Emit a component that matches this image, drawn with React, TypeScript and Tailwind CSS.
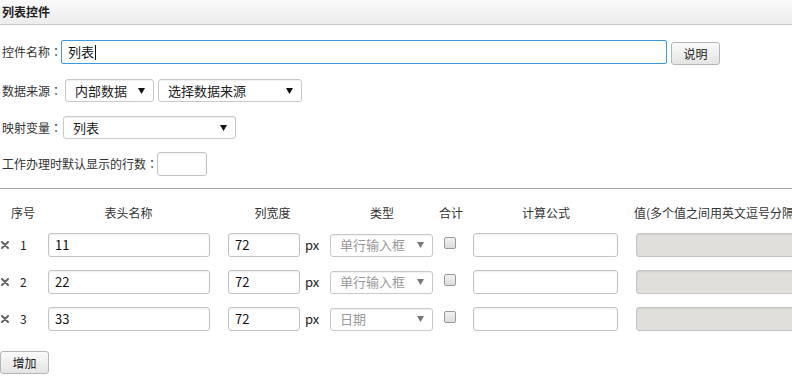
import React from "react";

const font = { fontFamily: '"Noto Sans CJK SC", "Liberation Sans", sans-serif' };

type Col = { name: string; width: string; type: string };

const rows: Col[] = [
  { name: "11", width: "72", type: "单行输入框" },
  { name: "22", width: "72", type: "单行输入框" },
  { name: "33", width: "72", type: "日期" },
];

function Arrow({ gray }: { gray?: boolean }) {
  return (
    <svg width="7" height="6" viewBox="0 0 7 6" className="shrink-0">
      <path d="M0 0 L7 0 L3.5 6 Z" fill={gray ? "#777" : "#111"} />
    </svg>
  );
}

function Select({ text, w, gray }: { text: string; w: string; gray?: boolean }) {
  return (
    <div
      className={`${w} flex h-[23px] shrink-0 items-center justify-between rounded-[3px] border border-[#c9c9c9] bg-white pl-[9px] pr-[8px] text-[13px] leading-[18px] shadow-[inset_0_1px_1px_rgba(0,0,0,0.06)] ${
        gray ? "text-[#999]" : "text-[#222]"
      }`}
    >
      <span>{text}</span>
      <Arrow gray={gray} />
    </div>
  );
}

function Input({ value, w, cls }: { value?: string; w: string; cls?: string }) {
  return (
    <div
      className={`${w} flex h-[24px] shrink-0 items-center rounded-[3px] border border-[#c4c4c4] px-[6px] text-[13px] text-[#111] shadow-[inset_0_1px_2px_rgba(0,0,0,0.08)] ${
        cls ?? "bg-white"
      }`}
    >
      {value}
    </div>
  );
}

function Btn({ children }: { children: React.ReactNode }) {
  return (
    <div className="flex h-[23px] w-[49px] shrink-0 items-center justify-center rounded-[3px] border border-[#b5b5b5] bg-gradient-to-b from-[#fafafa] to-[#e4e4e4] text-[12px] text-[#222]">
      {children}
    </div>
  );
}

function Cross() {
  return (
    <svg width="8" height="8" viewBox="0 0 8 8" className="shrink-0">
      <path d="M1 1 L7 7 M7 1 L1 7" stroke="#666" strokeWidth="2" strokeLinecap="round" />
    </svg>
  );
}

function Label({ text, w }: { text: string; w: string }) {
  return (
    <span className={`${w} shrink-0 pl-[2px]`}>
      {text}
      <span style={{ fontFamily: '"Noto Sans CJK TC", sans-serif' }}>：</span>
    </span>
  );
}

export default function App() {
  return (
    <div
      className="h-[391px] w-[792px] overflow-hidden whitespace-nowrap bg-white text-[12px] leading-[16px] text-[#333]"
      style={font}
    >
      <div className="flex h-[25px] items-center border-b border-[#c8c8c8] bg-gradient-to-b from-[#fbfbfb] to-[#ececec] pl-[2px] text-[12px] font-bold text-[#222]">
        列表控件
      </div>

      <div className="mt-[15px] flex items-start">
        <div className="mt-[4px] flex">
          <Label text="控件名称" w="w-[61px]" />
        </div>
        <div className="flex h-[24px] w-[606px] shrink-0 items-center rounded-[2px] border border-[#3e9be3] bg-white px-[6px] text-[13px] text-[#111]">
          列表<span className="ml-[1px] h-[15px] w-px bg-[#111]" />
        </div>
        <div className="ml-[4px] mt-[2px]">
          <Btn>说明</Btn>
        </div>
      </div>

      <div className="mt-[14px] flex items-center">
        <Label text="数据来源" w="w-[65px]" />
        <Select text="内部数据" w="w-[89px]" />
        <div className="ml-[4px]">
          <Select text="选择数据来源" w="w-[144px]" />
        </div>
      </div>

      <div className="mt-[14px] flex items-center">
        <Label text="映射变量" w="w-[63px]" />
        <Select text="列表" w="w-[173px]" />
      </div>

      <div className="mt-[13px] flex items-center">
        <Label text="工作办理时默认显示的行数" w="w-[157px]" />
        <Input w="w-[50px]" />
      </div>

      <div className="mt-[12px] h-px bg-[#a8a7a3]" />

      <div className="mt-[16px] flex items-center">
        <div className="w-[46px] shrink-0 text-center">序号</div>
        <div className="ml-[2px] w-[161px] shrink-0 text-center">表头名称</div>
        <div className="w-[116px] shrink-0 pl-[11px] text-center">列宽度</div>
        <div className="w-[114px] shrink-0 text-center">类型</div>
        <div className="w-[24px] shrink-0 text-center">合计</div>
        <div className="w-[166px] shrink-0 text-center">计算公式</div>
        <div className="shrink-0 pl-[5px]">值(多个值之间用英文逗号分隔)</div>
      </div>

      <div className="mt-[12px] flex flex-col gap-[13px]">
        {rows.map((r, i) => (
          <div key={i} className="flex items-center">
            <div className="flex w-[46px] shrink-0 items-center pl-[1px]">
              <Cross />
              <span className="ml-[11px] text-[12px] text-[#222]">{i + 1}</span>
            </div>
            <div className="ml-[2px] w-[180px] shrink-0">
              <Input value={r.name} w="w-[162px]" />
            </div>
            <div className="flex w-[102px] shrink-0 items-center">
              <Input value={r.width} w="w-[72px]" />
              <span className="ml-[5px] text-[13px] text-[#222]">px</span>
            </div>
            <div className="w-[114px] shrink-0">
              <Select text={r.type} w="w-[103px]" gray />
            </div>
            <div className="w-[29px] shrink-0">
              <div className="mb-[4px] h-[12px] w-[12px] rounded-[2px] border border-[#9a9a9a] bg-gradient-to-b from-[#f2f2f2] to-[#dcdcdc]" />
            </div>
            <div className="w-[163px] shrink-0">
              <Input w="w-[145px]" />
            </div>
            <div className="shrink-0">
              <Input w="w-[200px]" cls="bg-[#e0dfdc]" />
            </div>
          </div>
        ))}
      </div>

      <div className="mt-[20px]">
        <Btn>增加</Btn>
      </div>
    </div>
  );
}
